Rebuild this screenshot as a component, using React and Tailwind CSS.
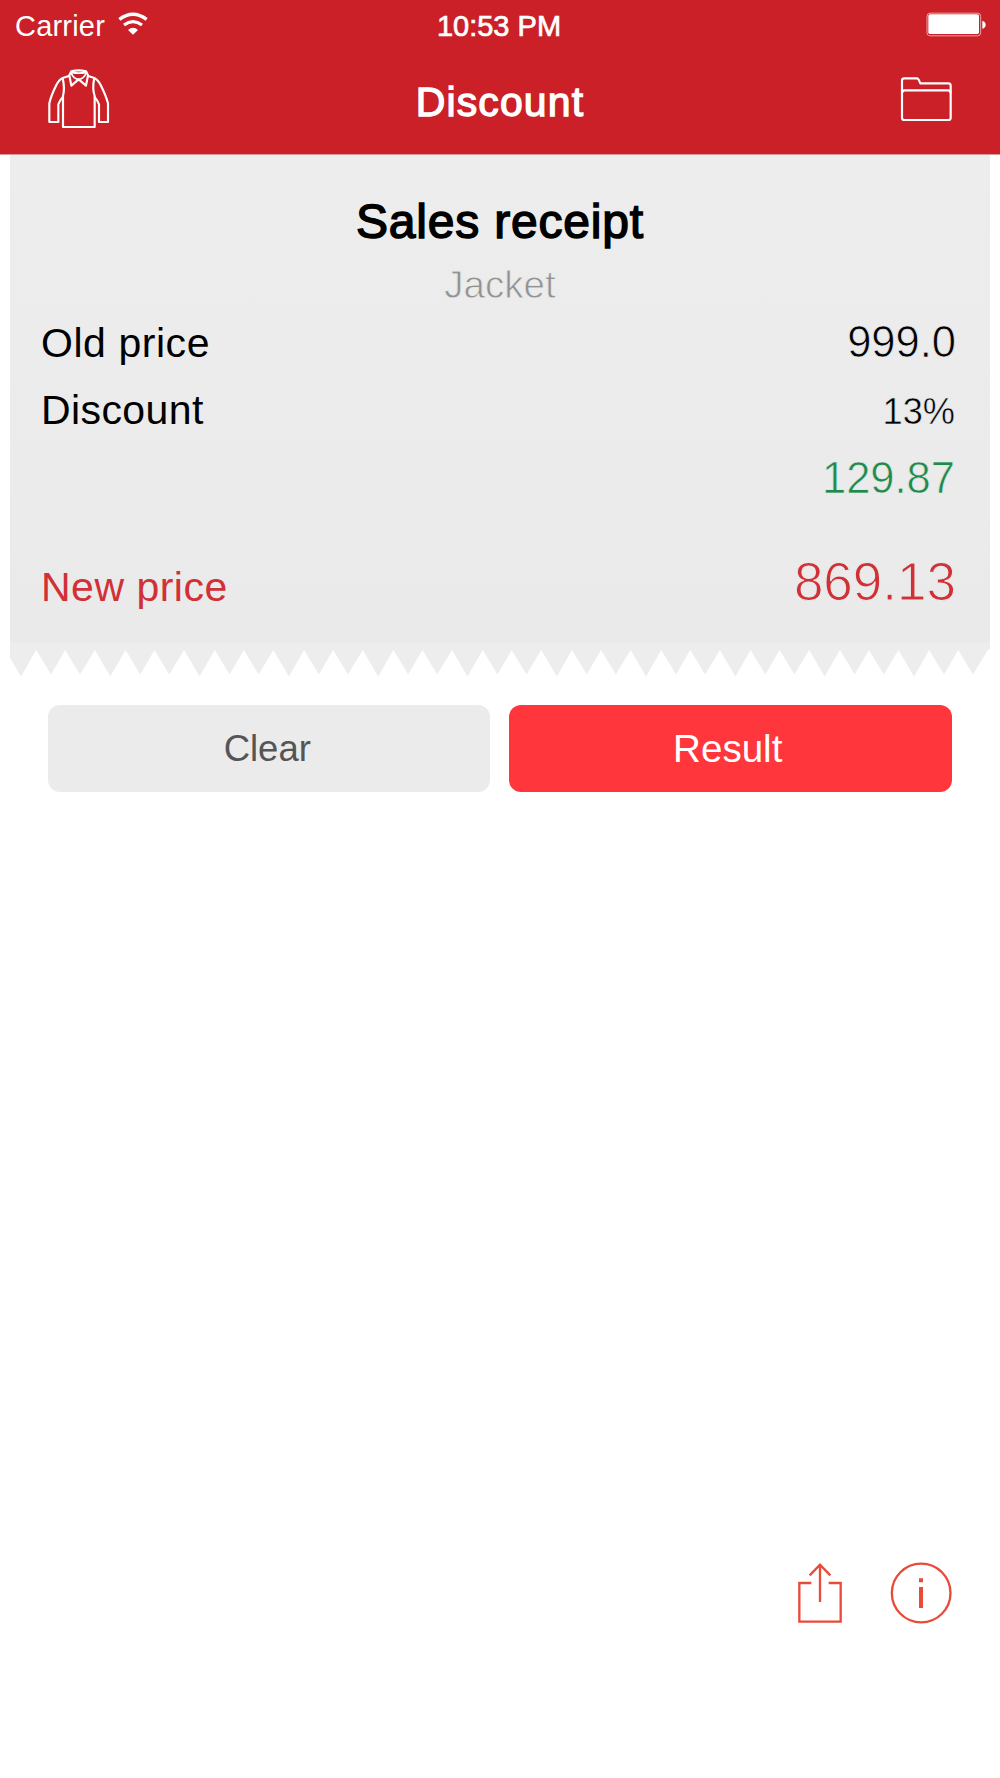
import React from "react";

const PERIOD = 89.3;

function tornEdgePath() {
  const points = ["0,0", "0,15"];
  for (let i = 0; i < 11; i++) {
    const x = 11 + i * PERIOD;
    points.push(`${x},33.5`, `${x + 15.2},7`, `${x + 30},31.5`, `${x + 44.2},7`, `${x + 59},31.5`, `${x + 73.8},7`);
  }
  points.push("1004,0");
  return points.join(" ");
}

function WifiIcon() {
  return (
    <svg className="h-[23px] w-[30px]" viewBox="355 37 90 69" fill="none" stroke="#fff">
      <path d="M359 59 Q400 28 441 59" strokeWidth="10" />
      <path d="M373 76 Q400 56 427 76" strokeWidth="10" />
      <path d="M385 91 Q400 77 415 91 L400 105 Z" fill="#fff" stroke="none" />
    </svg>
  );
}

function BatteryIcon() {
  return (
    <svg className="h-[26px] w-[61px]" viewBox="200 37 183 78" fill="none">
      <rect x="203" y="40.5" width="161" height="68" rx="9" stroke="#eba3a6" strokeWidth="3" />
      <rect x="207" y="44" width="152" height="59" rx="5" fill="#fff" />
      <path d="M369 63 Q379 66 379 75 Q379 84 369 87 Z" fill="#fff" />
    </svg>
  );
}

function JacketIcon() {
  return (
    <svg className="h-[61px] w-16" viewBox="138 204 192 183" fill="none" stroke="#fff" strokeWidth="6.5" strokeLinejoin="round">
      <path d="M209 227 L188 234 Q177 239 168 257 Q153 287 148 310 V366 H175 V313 Q179 302 189 290" />
      <path d="M262 227 L283 234 Q294 239 303 257 Q318 287 324 310 V366 H297 V313 Q293 302 283 290" />
      <path d="M188 234 Q195 265 189 288 V381 H284 V288 Q276 265 283 234" />
      <path d="M214 214 Q236 208 258 214 L264 226 L258 257 L236 238 L214 257 L208 226 Z" />
      <path d="M215 217 Q236 222 257 217 M214 219 Q219 236 236 238 Q253 236 258 219" strokeWidth="5" />
    </svg>
  );
}

function FolderIcon() {
  return (
    <svg className="h-[46px] w-[53px]" viewBox="120 228 159 138" fill="none" stroke="#fff" strokeWidth="6.5" strokeLinejoin="round">
      <path d="M126 242 Q126 235 133 235 H171 Q174 235 176 239 L181 250 H265 Q272 250 272 257 V353 Q272 360 265 360 H133 Q126 360 126 353 Z" />
      <path d="M126 279 Q127 271 134 271 H264 Q271 271 272 279" />
    </svg>
  );
}

function ShareIcon() {
  return (
    <svg className="h-[62px] w-[46px]" viewBox="81 67 138 186" fill="none" stroke="#e94b3a" strokeWidth="7">
      <path d="M124 130 H88 V246 H212 V130 H176" />
      <path d="M150 187 V75 M119 107 L150 75 L181 107" />
    </svg>
  );
}

function InfoIcon() {
  return (
    <svg className="h-[62px] w-[62px]" viewBox="361 66 186 186" fill="none">
      <circle cx="454.5" cy="159" r="88" stroke="#e94b3a" strokeWidth="7" />
      <path d="M448 115 H460 V127 H448 Z M448 141 H460 V204 H448 Z" fill="#e94b3a" />
    </svg>
  );
}

export default function App() {
  return (
    <div className="flex h-[1778px] w-[1000px] flex-col bg-white font-['Liberation_Sans',Arial,sans-serif] whitespace-nowrap">
      <header className="h-[155px] border-b border-[#d9989b] bg-[#cb2027] text-white">
        <div className="grid h-12 grid-cols-3 items-start pt-[10px] text-[29px] leading-8">
          <div className="flex pl-[15px]">
            <span className="tracking-[0.2px]">Carrier</span>
            <span className="ml-[13px] pt-[2px]"><WifiIcon /></span>
          </div>
          <span className="pr-[2px] text-center [-webkit-text-stroke:0.7px_#fff]">10:53 PM</span>
          <span className="flex justify-end pt-[2px] pr-[13px]"><BatteryIcon /></span>
        </div>
        <div className="grid h-[106px] grid-cols-3 items-start">
          <div className="pt-5 pl-[46px]"><JacketIcon /></div>
          <h1 className="pt-8 text-center text-[41px] leading-[44px] tracking-[1.1px] [-webkit-text-stroke:1.3px_#fff]">Discount</h1>
          <div className="flex justify-end pt-7 pr-[47px]"><FolderIcon /></div>
        </div>
      </header>

      <main className="flex flex-1 flex-col">
        <section className="mx-[10px] h-[488px] bg-linear-to-b from-[#ededed] to-[#eaeaea] pr-[34px] pl-[31px]">
          <h2 className="pt-10 pl-[3px] text-center text-[48px] leading-[54px] tracking-[0.8px] [-webkit-text-stroke:1.5px_#000]">Sales receipt</h2>
          <p className="pt-[9px] pl-[3px] text-center text-[38.6px] leading-[54px] text-[#929292] [-webkit-text-stroke:0.8px_#ececec]">Jacket</p>
          <div className="mt-[6px] flex h-[68px] items-baseline justify-between leading-[48px]">
            <span className="text-[41px] tracking-[0.55px]">Old price</span>
            <span className="text-[43.5px] [-webkit-text-stroke:0.7px_#ebebeb]">999.0</span>
          </div>
          <div className="flex h-[68px] items-baseline justify-between leading-[48px]">
            <span className="text-[41px] tracking-[0.4px]">Discount</span>
            <span className="pr-px text-[36.2px] [-webkit-text-stroke:0.5px_#ebebeb]">13%</span>
          </div>
          <div className="flex h-[98px] justify-end pr-px text-[43.5px] leading-[48px] text-[#1f8a4c] [-webkit-text-stroke:0.7px_#eaeaea]">129.87</div>
          <div className="flex justify-between text-[#d13036]">
            <span className="pt-[11px] text-[41px] leading-[48px] tracking-[0.5px]">New price</span>
            <span className="text-[53px] leading-[60px] [-webkit-text-stroke:1.1px_#eaeaea]">869.13</span>
          </div>
        </section>
        <svg className="mx-[10px] h-[34px] w-[980px]" viewBox="0 0 980 34">
          <polygon points={tornEdgePath()} fill="#ededed" />
        </svg>

        <div className="mt-7 flex gap-[19px] px-[48px] text-white">
          <button className="h-[87px] flex-1 rounded-xl bg-[#ebebeb] pt-[2px] pr-[3px] text-[36.5px] text-[#555]">Clear</button>
          <button className="h-[87px] flex-1 rounded-xl bg-[#ff363c] pr-[5px] text-[38.6px]">Result</button>
        </div>

        <footer className="mt-auto flex justify-end gap-[47px] pr-[48px] pb-[154px]">
          <ShareIcon />
          <InfoIcon />
        </footer>
      </main>
    </div>
  );
}
